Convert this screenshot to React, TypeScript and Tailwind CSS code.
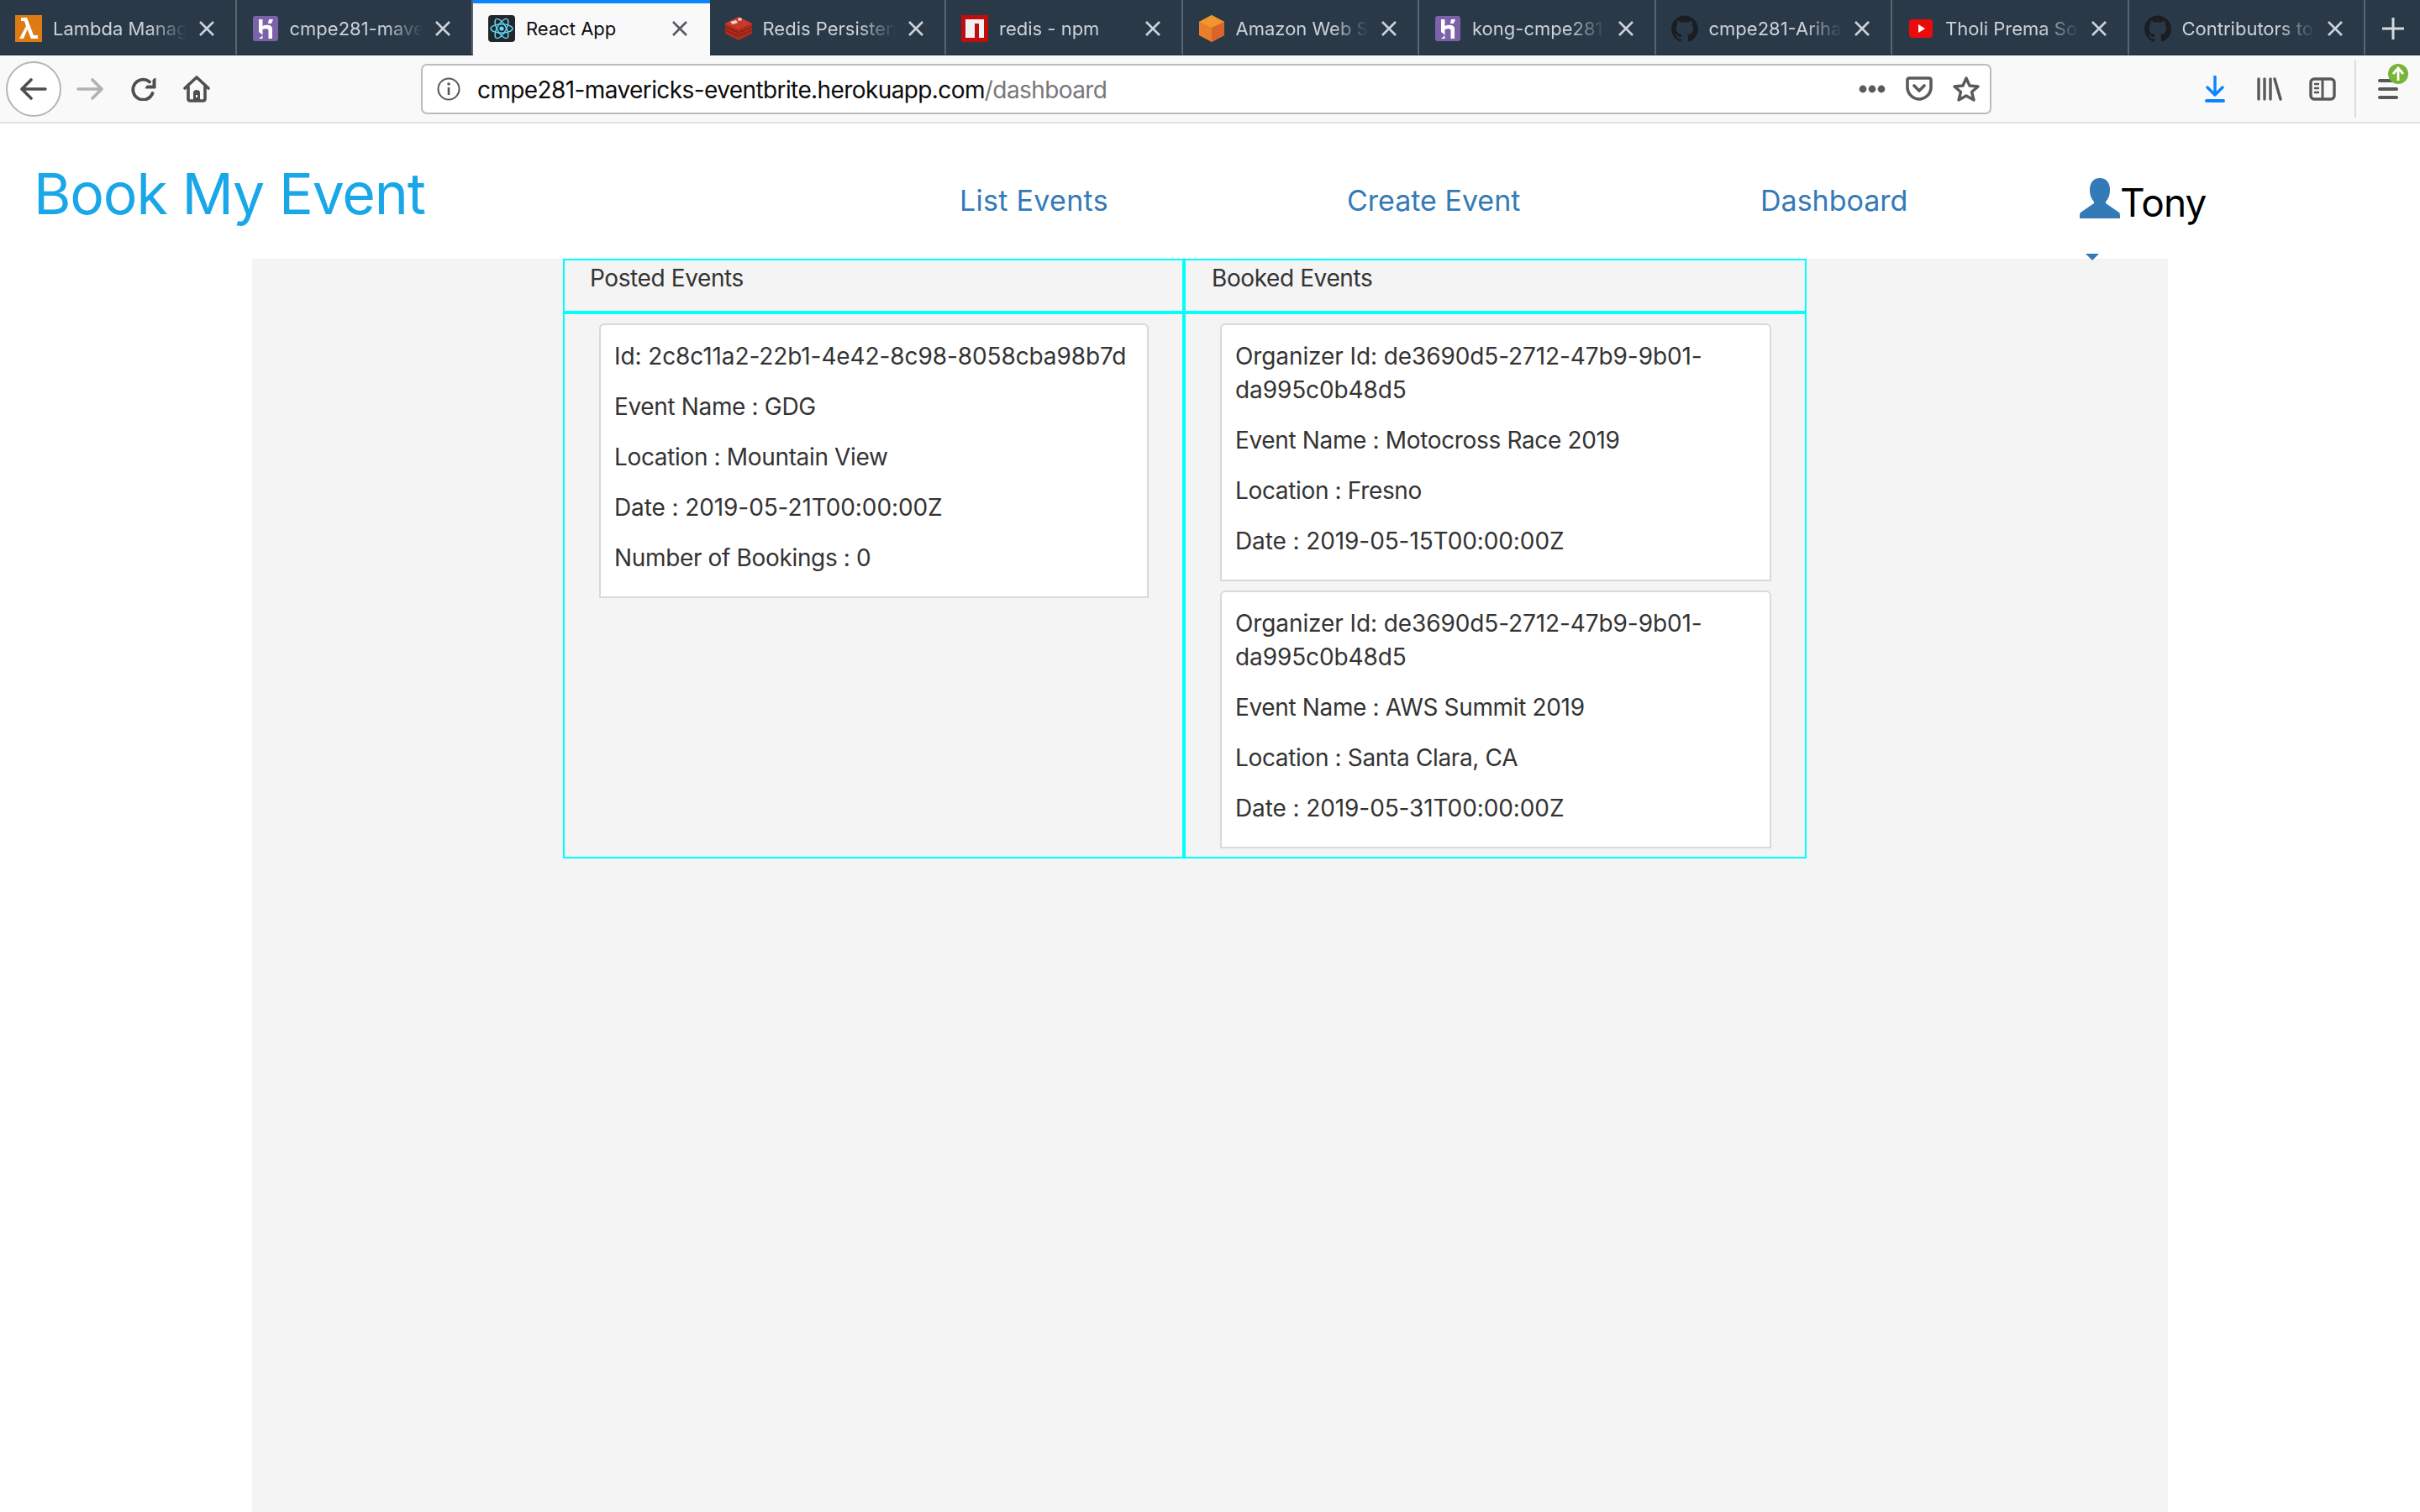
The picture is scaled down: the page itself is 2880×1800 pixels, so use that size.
import { SiGithub } from "react-icons/si"

const font = "font-['Inter','Liberation_Sans',sans-serif]"

function Close({ dark }: { dark?: boolean }) {
  return (
    <svg width="20" height="18" viewBox="0 0 20 18" className={dark ? "text-[#555b61]" : "text-[#ccd2d8]"}>
      <path d="M2 1 L18 17 M18 1 L2 17" stroke="currentColor" strokeWidth="2.6" fill="none" />
    </svg>
  )
}

function Lambda() {
  return (
    <svg width="32" height="32" viewBox="0 0 32 32">
      <rect width="32" height="32" fill="#de7b12" />
      <path d="M5 28 L13 13 L11 7 H7 V3 H14 L22 24 H27 V28 H19 L14.5 17 L10 28 Z" fill="#fff" />
    </svg>
  )
}

function Heroku() {
  return (
    <svg width="32" height="32" viewBox="0 0 32 32">
      <rect x="1" y="1" width="30" height="30" rx="3" fill="#7c62a8" />
      <path d="M8 5 H12.5 V13 C16 11 24 11 24 16 V28 H19.5 V18 C19.5 15.5 15 16 12.5 17 V28 H8 Z" fill="#fff" />
      <path d="M20 5 H25 L23 10 H19 Z" fill="#fff" />
      <path d="M8 20 L13 24 L8 28 Z" fill="#7c62a8" />
    </svg>
  )
}

function ReactIcon() {
  return (
    <svg width="32" height="32" viewBox="0 0 32 32">
      <rect width="32" height="32" rx="4" fill="#23272b" />
      <g fill="none" stroke="#61dafb" strokeWidth="1.4">
        <ellipse cx="16" cy="16" rx="13" ry="5.2" />
        <ellipse cx="16" cy="16" rx="13" ry="5.2" transform="rotate(60 16 16)" />
        <ellipse cx="16" cy="16" rx="13" ry="5.2" transform="rotate(120 16 16)" />
      </g>
      <circle cx="16" cy="16" r="2.6" fill="#61dafb" />
    </svg>
  )
}

function Redis() {
  return (
    <svg width="32" height="32" viewBox="0 0 32 32">
      <path d="M0 10 L16 2 L32 10 V22 L16 30 L0 22 Z" fill="#b02c1e" />
      <path d="M0 10 L16 2 L32 10 L16 17 Z" fill="#c73a2a" />
      <path d="M0 14 L16 21 L32 14 M0 18 L16 25 L32 18" stroke="#8a2116" strokeWidth="1.5" fill="none" />
      <path d="M6 8 L13 6 L15 9 L9 11 Z M15 4 L19 3 L20 6 L16 7 Z" fill="#f1d6d2" />
    </svg>
  )
}

function Npm() {
  return (
    <svg width="32" height="32" viewBox="0 0 32 32">
      <rect width="32" height="32" fill="#c00d0d" />
      <path d="M5 5 H27 V27 H21 V10 H16 V27 H5 Z" fill="#f2f2f2" />
    </svg>
  )
}

function Aws() {
  return (
    <svg width="32" height="32" viewBox="0 0 32 32">
      <path d="M16 0 L31 8 V24 L16 32 L1 24 V8 Z" fill="#e97f2a" />
      <path d="M16 0 L31 8 L16 15 L1 8 Z" fill="#f0962c" />
      <path d="M16 15 L31 8 V24 L16 32 Z" fill="#d9652a" />
    </svg>
  )
}

function GithubIcon() {
  return <SiGithub className="text-[#1a1e22]" size={32} />
}

function Youtube() {
  return (
    <svg width="32" height="32" viewBox="0 0 32 32">
      <rect x="2" y="5" width="28" height="22" rx="4" fill="#ec0b0b" />
      <path d="M13 11 L21 16 L13 21 Z" fill="#fff" />
    </svg>
  )
}

const tabs = [
  { title: "Lambda Management Console", icon: <Lambda /> },
  { title: "cmpe281-mavericks-eventbrite", icon: <Heroku /> },
  { title: "React App", icon: <ReactIcon />, active: true },
  { title: "Redis Persistence", icon: <Redis /> },
  { title: "redis - npm", icon: <Npm /> },
  { title: "Amazon Web Services", icon: <Aws /> },
  { title: "kong-cmpe281-heroku", icon: <Heroku /> },
  { title: "cmpe281-Arihant", icon: <GithubIcon /> },
  { title: "Tholi Prema Songs", icon: <Youtube /> },
  { title: "Contributors to", icon: <GithubIcon /> },
]

function TabBar() {
  return (
    <div className="flex h-[66px] shrink-0 bg-[#2a3948]">
      {tabs.map((t) =>
        t.active ? (
          <div key={t.title} className="flex h-[66px] w-[281.5px] shrink-0 items-center border-t-[4px] border-[#0a84ff] bg-[#f9f9fa] pb-[2px] pl-[18px] pr-[26px]">
            {t.icon}
            <span className="ml-[13px] flex-1 text-[22px] text-[#0c0c0d]">{t.title}</span>
            <Close dark />
          </div>
        ) : (
          <div key={t.title} className="flex h-[66px] w-[281.5px] shrink-0 items-center border-r-2 border-b-2 border-r-[#59646f] border-b-[#25323f] pl-[18px] pr-[24px] pt-[4px]">
            {t.icon}
            <span className="ml-[13px] mr-[14px] flex-1 overflow-hidden whitespace-nowrap text-[22px] text-[#ccd2d8] [mask-image:linear-gradient(to_right,#000_72%,transparent)]">
              {t.title}
            </span>
            <Close />
          </div>
        ),
      )}
      <div className="flex flex-1 items-center justify-center border-b-2 border-[#25323f] pt-[4px]">
        <svg width="28" height="28" viewBox="0 0 28 28">
          <path d="M14 1 V27 M1 14 H27" stroke="#d5dade" strokeWidth="3" />
        </svg>
      </div>
    </div>
  )
}

function Toolbar() {
  return (
    <div className="flex h-[81px] shrink-0 items-center border-b-2 border-[#e1e1e2] bg-[#f9f9fa]">
      <div className="ml-[7px] flex h-[66px] w-[66px] items-center justify-center rounded-full border-2 border-[#b5b5b5] bg-white">
        <svg width="32" height="26" viewBox="0 0 32 26">
          <path d="M13 2 L2 13 L13 24 M2 13 H30" stroke="#4f4f52" strokeWidth="3.6" strokeLinecap="round" strokeLinejoin="round" fill="none" />
        </svg>
      </div>
      <svg className="ml-[18px]" width="32" height="26" viewBox="0 0 32 26">
        <path d="M19 2 L30 13 L19 24 M30 13 H2" stroke="#b1b1b3" strokeWidth="3.6" strokeLinecap="round" strokeLinejoin="round" fill="none" />
      </svg>
      <svg className="ml-[33px]" width="30" height="28" viewBox="0 0 30 28">
        <path d="M25.5 19 A12 12 0 1 1 22 5.5" stroke="#4f4f52" strokeWidth="3.8" strokeLinecap="round" fill="none" />
        <path d="M29 1 V13 H17 L19 10 H26 V3 Z" fill="#4f4f52" stroke="#4f4f52" strokeWidth="1" />
      </svg>
      <svg className="ml-[32px]" width="32" height="32" viewBox="0 0 32 32">
        <path d="M2 15 L16 2 L30 15 M6 13 V28 C6 29 7 30 8 30 H24 C25 30 26 29 26 28 V13" stroke="#4f4f52" strokeWidth="3.6" strokeLinecap="round" strokeLinejoin="round" fill="none" />
        <path d="M12 30 V20 C12 18 14 17 16 17 C18 17 20 18 20 20 V30 Z M15 23 V26 H17 V23 Z" fill="#4f4f52" fillRule="evenodd" />
      </svg>
      <div className="ml-[251px] flex h-[60px] w-[1869px] items-center rounded-[7px] border-2 border-[#bcbcbc] bg-white pl-[17px] pr-[12px]">
        <svg width="28" height="28" viewBox="0 0 28 28">
          <circle cx="14" cy="14" r="12.5" stroke="#58585b" strokeWidth="2" fill="none" />
          <path d="M14 12 V21" stroke="#58585b" strokeWidth="2.6" />
          <circle cx="14" cy="8" r="1.8" fill="#58585b" />
        </svg>
        <span className="ml-[20px] flex-1 whitespace-nowrap pt-[2px] text-[28px] tracking-[-0.6px] text-[#0c0c0d]">
          cmpe281-mavericks-eventbrite.herokuapp.com<span className="text-[#77777a]">/dashboard</span>
        </span>
        <svg width="32" height="10" viewBox="0 0 32 10">
          <circle cx="5" cy="5" r="4.4" fill="#5a5a5d" />
          <circle cx="16" cy="5" r="4.4" fill="#5a5a5d" />
          <circle cx="27" cy="5" r="4.4" fill="#5a5a5d" />
        </svg>
        <svg className="ml-[24px]" width="32" height="29" viewBox="0 0 32 29">
          <path d="M4 2 H28 C29 2 30 3 30 4 V13 C30 21 23 27 16 27 C9 27 2 21 2 13 V4 C2 3 3 2 4 2 Z" stroke="#5a5a5d" strokeWidth="3.6" strokeLinejoin="round" fill="none" />
          <path d="M10 11 L16 17 L22 11" stroke="#5a5a5d" strokeWidth="3.6" strokeLinecap="round" strokeLinejoin="round" fill="none" />
        </svg>
        <svg className="ml-[24px]" width="32" height="32" viewBox="0 0 32 32">
          <path d="M16 3 L20 12 L30 13 L22.5 19.5 L25 29 L16 24 L7 29 L9.5 19.5 L2 13 L12 12 Z" stroke="#5a5a5d" strokeWidth="3.4" strokeLinejoin="round" fill="none" />
        </svg>
      </div>
      <svg className="ml-[254px]" width="24" height="32" viewBox="0 0 24 32">
        <path d="M12 1 V22 M3 14 L12 23 L21 14" stroke="#0a84ff" strokeWidth="3.4" strokeLinecap="round" strokeLinejoin="round" fill="none" />
        <rect x="0" y="28" width="24" height="4" rx="2" fill="#0a84ff" />
      </svg>
      <svg className="ml-[38px]" width="30" height="28" viewBox="0 0 30 28">
        <path d="M2 2 V26 M9 2 V26 M16 2 V26 M21 2 L28 26" stroke="#58585b" strokeWidth="3.4" strokeLinecap="round" fill="none" />
      </svg>
      <svg className="ml-[32px]" width="32" height="28" viewBox="0 0 32 28">
        <rect x="2" y="2" width="28" height="24" rx="4" stroke="#58585b" strokeWidth="3.4" fill="none" />
        <path d="M16 2 V26" stroke="#58585b" strokeWidth="3" />
        <path d="M6 8 H12 M6 13 H12 M6 18 H12" stroke="#58585b" strokeWidth="2.4" />
      </svg>
      <div className="ml-[22px] h-[68px] w-[2px] bg-[#dcdcdd]" />
      <div className="relative ml-[26px] flex h-[24px] w-[24px] flex-col justify-between self-center">
        <div className="h-[4px] w-full rounded-full bg-[#58585b]" />
        <div className="h-[4px] w-full rounded-full bg-[#58585b]" />
        <div className="h-[4px] w-full rounded-full bg-[#58585b]" />
        <svg className="absolute -top-[18px] left-[12px]" width="24" height="24" viewBox="0 0 24 24">
          <circle cx="12" cy="12" r="12" fill="#76b539" />
          <path d="M12 20 V6 M6 12 L12 5 L18 12" stroke="#fff" strokeWidth="2.8" fill="none" />
        </svg>
      </div>
    </div>
  )
}

function AppNav() {
  return (
    <header className="relative flex h-[161px] shrink-0 bg-white">
      <a className="ml-[40px] mt-[42px] w-[1102px] shrink-0 text-[68px] leading-[82px] tracking-[-1.2px] text-[#1aa7e8]">Book My Event</a>
      <nav className="mt-[70px] flex items-start text-[34px] leading-[44px] text-[#337ab7]">
        <a className="w-[461px] tracking-[0.3px]">List Events</a>
        <a className="w-[492px]">Create Event</a>
        <a className="w-[380px]">Dashboard</a>
      </nav>
      <div className="mt-[65px] flex items-start text-[46px] leading-[58px] tracking-[-0.9px] text-black">
        <svg width="48" height="48" viewBox="0 0 48 48">
          <path d="M24 0 C32 0 36 6 36 14 C36 22 33 26 31 28 V30 L47 41 C48 42 48 44 48 48 H0 C0 44 0 42 1 41 L17 30 V28 C15 26 12 22 12 14 C12 6 16 0 24 0 Z" fill="#337ab7" />
        </svg>
        <span>Tony</span>
      </div>
      <div className="absolute left-[2482px] top-[155px] z-10 h-0 w-0 border-x-[8px] border-t-[8px] border-x-transparent border-t-[#337ab7]" />
    </header>
  )
}

function EventCard({ lines }: { lines: string[] }) {
  return (
    <div className="rounded-t-[6px] border-2 border-[#d6d9de] bg-white px-[16px] pt-[17px] pb-[6px] text-[28px] leading-[40px] tracking-[-0.1px] text-[#333]">
      {lines.map((l) => (
        // lines that are mostly letters run wider in Inter than in the original font
        <p key={l} className={/^(Event|Location|Number)/.test(l) ? "mb-[20px] tracking-[-0.35px]" : "mb-[20px]"}>
          {l}
        </p>
      ))}
    </div>
  )
}

export default function App() {
  return (
    <div className={`flex h-[1800px] w-[2880px] flex-col overflow-hidden bg-white ${font}`}>
      <TabBar />
      <Toolbar />
      <AppNav />
      <main className="mx-[300px] flex-1 bg-[#f4f4f4]">
        <div className="ml-[370px] grid w-[1480px] grid-cols-[737px_739px] grid-rows-[64px_646px] border-2 border-[#00ffff] text-[28px] leading-[40px] tracking-[-0.4px] text-[#333]">
          <div className="border-r-2 border-b-4 border-[#00ffff] pl-[30px] pt-[1px]">Posted Events</div>
          <div className="border-l-2 border-b-4 border-[#00ffff] pl-[31px] pt-[1px]">Booked Events</div>
          <div className="border-r-2 border-[#00ffff] pl-[41px] pr-[40px] pt-[11px]">
            <EventCard
              lines={[
                "Id: 2c8c11a2-22b1-4e42-8c98-8058cba98b7d",
                "Event Name : GDG",
                "Location : Mountain View",
                "Date : 2019-05-21T00:00:00Z",
                "Number of Bookings : 0",
              ]}
            />
          </div>
          <div className="flex flex-col gap-[11px] border-l-2 border-[#00ffff] pl-[41px] pr-[40px] pt-[11px]">
            <EventCard
              lines={[
                "Organizer Id: de3690d5-2712-47b9-9b01-da995c0b48d5",
                "Event Name : Motocross Race 2019",
                "Location : Fresno",
                "Date : 2019-05-15T00:00:00Z",
              ]}
            />
            <EventCard
              lines={[
                "Organizer Id: de3690d5-2712-47b9-9b01-da995c0b48d5",
                "Event Name : AWS Summit 2019",
                "Location : Santa Clara, CA",
                "Date : 2019-05-31T00:00:00Z",
              ]}
            />
          </div>
        </div>
      </main>
    </div>
  )
}
